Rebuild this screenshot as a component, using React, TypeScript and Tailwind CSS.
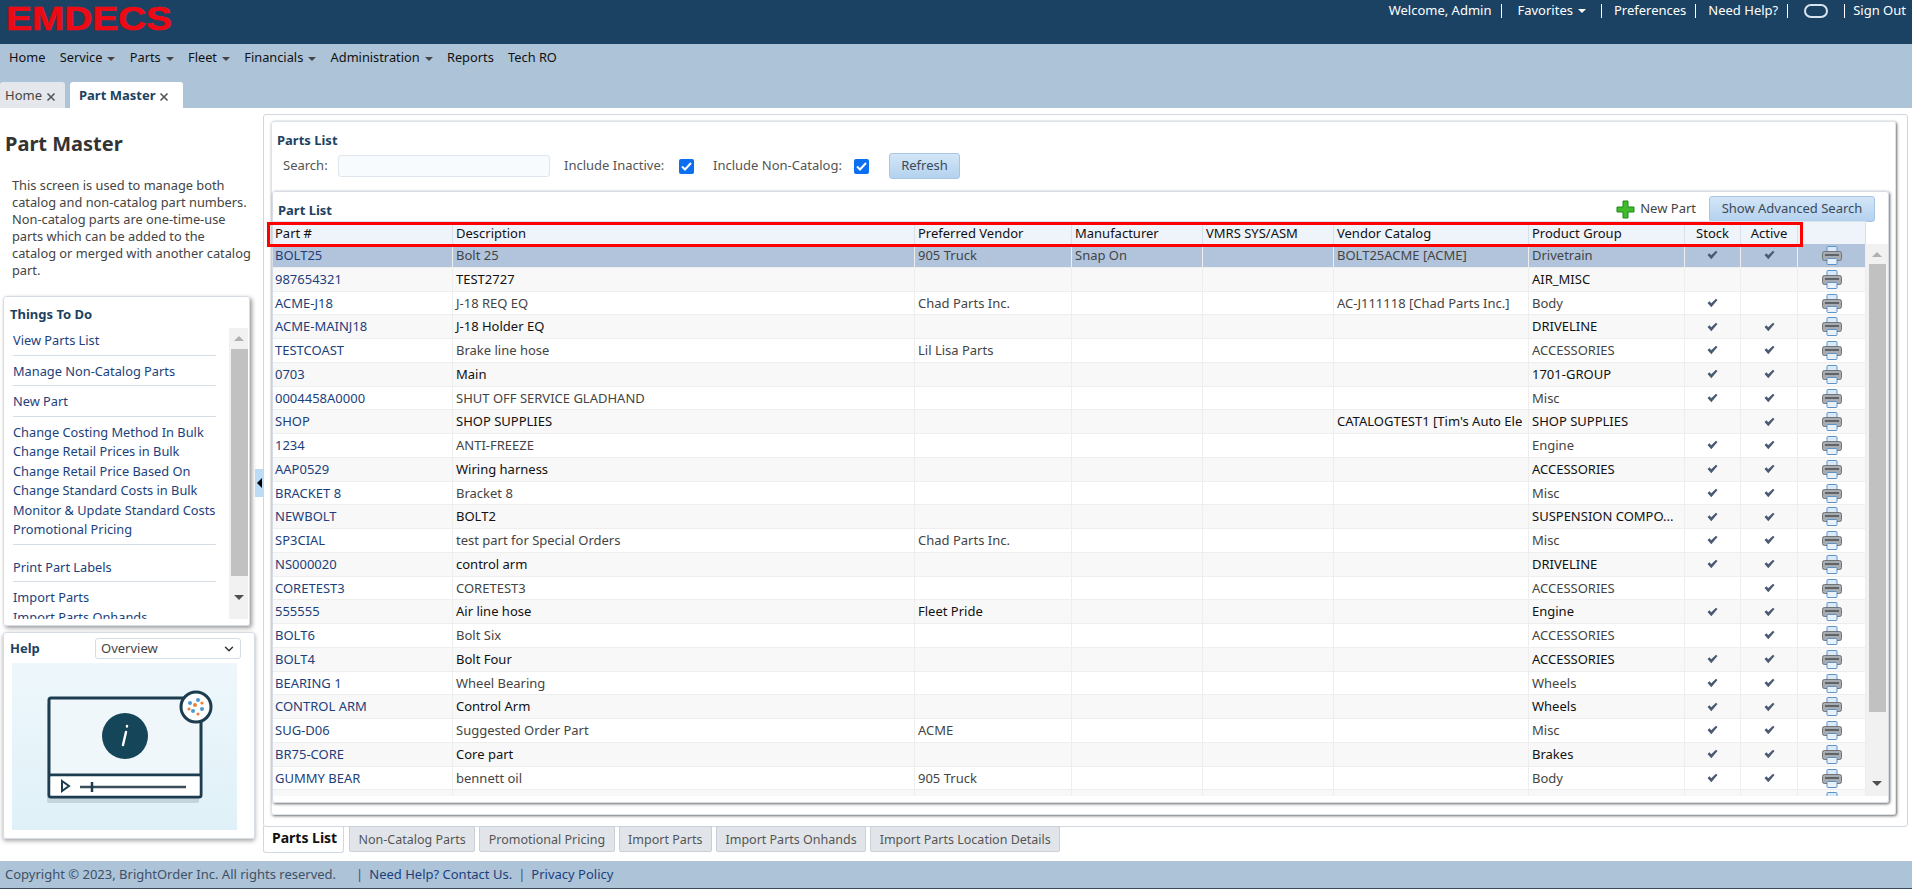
import { ChevronDown } from 'lucide-react';

type Part = {
  part: string;
  desc: string;
  vendor?: string;
  mfr?: string;
  catalog?: string;
  group: string;
  stock?: boolean;
  active?: boolean;
};

const parts: Part[] = [
  { part: 'BOLT25', desc: 'Bolt 25', vendor: '905 Truck', mfr: 'Snap On', catalog: 'BOLT25ACME [ACME]', group: 'Drivetrain', stock: true, active: true },
  { part: '987654321', desc: 'TEST2727', group: 'AIR_MISC' },
  { part: 'ACME-J18', desc: 'J-18 REQ EQ', vendor: 'Chad Parts Inc.', catalog: 'AC-J111118 [Chad Parts Inc.]', group: 'Body', stock: true },
  { part: 'ACME-MAINJ18', desc: 'J-18 Holder EQ', group: 'DRIVELINE', stock: true, active: true },
  { part: 'TESTCOAST', desc: 'Brake line hose', vendor: 'Lil Lisa Parts', group: 'ACCESSORIES', stock: true, active: true },
  { part: '0703', desc: 'Main', group: '1701-GROUP', stock: true, active: true },
  { part: '0004458A0000', desc: 'SHUT OFF SERVICE GLADHAND', group: 'Misc', stock: true, active: true },
  { part: 'SHOP', desc: 'SHOP SUPPLIES', catalog: "CATALOGTEST1 [Tim's Auto Ele", group: 'SHOP SUPPLIES', active: true },
  { part: '1234', desc: 'ANTI-FREEZE', group: 'Engine', stock: true, active: true },
  { part: 'AAP0529', desc: 'Wiring harness', group: 'ACCESSORIES', stock: true, active: true },
  { part: 'BRACKET 8', desc: 'Bracket 8', group: 'Misc', stock: true, active: true },
  { part: 'NEWBOLT', desc: 'BOLT2', group: 'SUSPENSION COMPO...', stock: true, active: true },
  { part: 'SP3CIAL', desc: 'test part for Special Orders', vendor: 'Chad Parts Inc.', group: 'Misc', stock: true, active: true },
  { part: 'NS000020', desc: 'control arm', group: 'DRIVELINE', stock: true, active: true },
  { part: 'CORETEST3', desc: 'CORETEST3', group: 'ACCESSORIES', active: true },
  { part: '555555', desc: 'Air line hose', vendor: 'Fleet Pride', group: 'Engine', stock: true, active: true },
  { part: 'BOLT6', desc: 'Bolt Six', group: 'ACCESSORIES', active: true },
  { part: 'BOLT4', desc: 'Bolt Four', group: 'ACCESSORIES', stock: true, active: true },
  { part: 'BEARING 1', desc: 'Wheel Bearing', group: 'Wheels', stock: true, active: true },
  { part: 'CONTROL ARM', desc: 'Control Arm', group: 'Wheels', stock: true, active: true },
  { part: 'SUG-D06', desc: 'Suggested Order Part', vendor: 'ACME', group: 'Misc', stock: true, active: true },
  { part: 'BR75-CORE', desc: 'Core part', group: 'Brakes', stock: true, active: true },
  { part: 'GUMMY BEAR', desc: 'bennett oil', vendor: '905 Truck', group: 'Body', stock: true, active: true },
  { part: '', desc: '', group: '' },
];

const columns = 'grid grid-cols-[180px_462px_157px_131px_131px_195px_156px_56px_57px_68px]';

function Caret({ light = false }: { light?: boolean }) {
  return <span className={`ml-[5px] inline-block h-0 w-0 border-x-[4px] border-t-[4px] border-x-transparent align-middle ${light ? 'border-t-white' : 'border-t-[#444]'}`} />;
}

function Sep() {
  return <span className="h-[14px] w-px bg-white" />;
}

function Close() {
  return (
    <svg width="10" height="10" viewBox="0 0 10 10" className="mt-[3px] ml-[4px]">
      <path d="M1.5 1.5l7 7M8.5 1.5l-7 7" stroke="#555" strokeWidth="1.6" />
    </svg>
  );
}

function Check() {
  return (
    <svg width="11" height="10" viewBox="0 0 11 10">
      <path d="M0.5 5L2.5 3.2L4.2 5.2L9 0.8L10.5 2L4.3 9.2Z" fill="#4a5a72" />
    </svg>
  );
}

function PrinterIcon() {
  return (
    <svg width="20" height="19" viewBox="0 0 20 19">
      <rect x="5" y="0.5" width="10" height="6" rx="1" fill="#dbeafa" stroke="#5c93c9" />
      <rect x="0.5" y="5.5" width="19" height="9" rx="2" fill="#a8abb0" stroke="#6f7479" />
      <rect x="3" y="8" width="14" height="2" fill="#5f6469" />
      <rect x="5" y="12.5" width="10" height="6" rx="1" fill="#e9f2fb" stroke="#5c93c9" />
    </svg>
  );
}

function Box({ checked }: { checked?: boolean }) {
  return (
    <span className="flex h-[15px] w-[15px] items-center justify-center rounded-[2px] bg-[#0b6fef]">
      {checked && (
        <svg width="11" height="9" viewBox="0 0 11 9">
          <path d="M1 4.5L4 7.5L10 1" fill="none" stroke="white" strokeWidth="2" />
        </svg>
      )}
    </span>
  );
}

function Divider() {
  return <div className="mt-[4px] mb-[6px] h-px w-[203px] bg-[#d5dde6]" />;
}

function TodoLink({ children }: { children: string }) {
  return <div className="h-[19.5px] leading-[19.5px] whitespace-nowrap text-[#1c3f7c]">{children}</div>;
}

function HelpGraphic() {
  return (
    <svg width="225" height="167" viewBox="0 0 225 167" className="block">
      <defs>
        <linearGradient id="helpBg" x1="0" y1="0" x2="0" y2="1">
          <stop offset="0" stopColor="#eef7fb" />
          <stop offset="1" stopColor="#dff1f8" />
        </linearGradient>
      </defs>
      <rect width="225" height="167" fill="url(#helpBg)" />
      <rect x="35" y="40" width="152" height="100" rx="2" fill="#6b7f8c" opacity="0.25" />
      <rect x="37" y="35" width="152" height="99" rx="2" fill="#f0f7fb" stroke="#1c3d4f" strokeWidth="3" />
      <path d="M37 112H189" stroke="#1c3d4f" strokeWidth="3" />
      <rect x="38.5" y="113.5" width="149" height="19" fill="#ffffff" />
      <path d="M50 118l7 5-7 5z" fill="none" stroke="#1c3d4f" strokeWidth="2" />
      <path d="M68 124H174" stroke="#3a4c58" strokeWidth="2.5" />
      <path d="M80 119V129" stroke="#1c3d4f" strokeWidth="2.5" />
      <circle cx="113" cy="73" r="23" fill="#154559" />
      <path d="M115 63v.5M114 69l-3 13" stroke="#fff" strokeWidth="2.4" strokeLinecap="round" />
      <circle cx="184" cy="44" r="15" fill="#fff" stroke="#1c3d4f" strokeWidth="3" />
      <g fill="#4a9bd4">
        <circle cx="178" cy="40" r="2" />
        <circle cx="186" cy="37" r="2" />
        <circle cx="190" cy="46" r="2" />
        <circle cx="181" cy="48" r="2" />
      </g>
      <g fill="#e8823c">
        <circle cx="183" cy="42" r="2" />
        <circle cx="177" cy="46" r="1.6" />
        <circle cx="186" cy="51" r="1.6" />
        <circle cx="190" cy="40" r="1.6" />
      </g>
    </svg>
  );
}

function Sidebar() {
  return (
    <aside className="relative flex w-[263px] shrink-0 flex-col pl-[3px]">
      <h1 className="mt-[23px] ml-[2px] text-[20px] leading-[26px] font-bold text-[#333]">Part Master</h1>
      <p className="mt-[20px] ml-[9px] text-[12.8px] leading-[17px] whitespace-nowrap text-[#444]">
        This screen is used to manage both<br />
        catalog and non-catalog part numbers.<br />
        Non-catalog parts are one-time-use<br />
        parts which can be added to the<br />
        catalog or merged with another catalog<br />
        part.
      </p>
      <section className="mt-[17px] h-[330px] w-[247px] rounded-[3px] border border-[#d5dce4] shadow-[2px_2px_4px_rgba(0,0,0,0.4)]">
        <h3 className="mt-[8px] ml-[6px] text-[13px] leading-[18px] font-bold text-[#1c4263]">Things To Do</h3>
        <div className="mt-[5px] flex">
          <div className="ml-[9px] h-[291px] w-[216px] overflow-hidden pt-[3px] text-[12.8px]">
            <TodoLink>View Parts List</TodoLink>
            <Divider />
            <TodoLink>Manage Non-Catalog Parts</TodoLink>
            <Divider />
            <TodoLink>New Part</TodoLink>
            <Divider />
            <TodoLink>Change Costing Method In Bulk</TodoLink>
            <TodoLink>Change Retail Prices in Bulk</TodoLink>
            <TodoLink>Change Retail Price Based On</TodoLink>
            <TodoLink>Change Standard Costs in Bulk</TodoLink>
            <TodoLink>Monitor & Update Standard Costs</TodoLink>
            <TodoLink>Promotional Pricing</TodoLink>
            <Divider />
            <div className="mt-[13px]"><TodoLink>Print Part Labels</TodoLink></div>
            <Divider />
            <TodoLink>Import Parts</TodoLink>
            <TodoLink>Import Parts Onhands</TodoLink>
          </div>
          <div className="flex h-[291px] w-[19px] flex-col items-end bg-[#f1f1f1]">
            <div className="flex h-[21px] w-full items-center justify-center">
              <span className="h-0 w-0 border-x-[5px] border-b-[5px] border-x-transparent border-b-[#b0b0b0]" />
            </div>
            <div className="h-[227px] w-[17px] bg-[#c1c1c1]" />
            <div className="flex w-full flex-1 items-center justify-center">
              <span className="h-0 w-0 border-x-[5px] border-t-[5px] border-x-transparent border-t-[#505050]" />
            </div>
          </div>
        </div>
      </section>
      <section className="mt-[6px] h-[207px] w-[252px] rounded-[3px] border border-[#d5dce4] shadow-[0_2px_4px_rgba(0,0,0,0.35)]">
        <div className="mt-[5px] flex items-center">
          <span className="ml-[6px] w-[85px] text-[13px] leading-[21px] font-bold text-[#1c4263]">Help</span>
          <div className="flex h-[21px] w-[146px] items-center justify-between rounded-[3px] border border-[#d5dce4] pr-[4px] pl-[5px] text-[13px] text-[#444]">
            Overview
            <ChevronDown size={14} strokeWidth={2.5} className="text-[#333]" />
          </div>
        </div>
        <div className="mt-[4px] ml-[8px]">
          <HelpGraphic />
        </div>
      </section>
      <button className="absolute top-[361px] left-[255px] flex h-[28px] w-[9px] items-center justify-center bg-[#bcdcf6]">
        <span className="h-0 w-0 border-y-[5px] border-r-[5px] border-y-transparent border-r-black" />
      </button>
    </aside>
  );
}

function PartGrid() {
  return (
    <section className="relative mt-[12px] h-[612px] w-[1617px] rounded-[3px] border border-[#d5dce4] shadow-[1px_1px_3px_rgba(0,0,0,0.6)]">
      <div className="flex h-[29px] items-end pr-[13px] pl-[5px]">
        <h3 className="mb-[2px] text-[13px] leading-[18px] font-bold text-[#1c4263]">Part List</h3>
        <div className="mb-[-1px] ml-auto flex items-center">
          <svg width="19" height="19" viewBox="0 0 19 19">
            <path d="M7 1h5v6h6v5h-6v6H7v-6H1V7h6z" fill="#3fbb2c" stroke="#1c8a18" strokeWidth="1" />
          </svg>
          <span className="mr-[13px] ml-[5px] text-[13px] text-[#444]">New Part</span>
          <button className="h-[26px] w-[166px] rounded-[3px] border border-[#a6c6e4] bg-gradient-to-b from-[#d4e6f7] to-[#b3d1ee] text-[13px] text-[#3a4a5a]">Show Advanced Search</button>
        </div>
      </div>
      <div className="flex">
        <div className="w-[1593px] overflow-hidden">
          <div className={`${columns} h-[23px] border-t border-[#dde3ea] bg-[#eff3fa] text-[13px] leading-[22px] text-[#111]`}>
            <div className="border-r border-[#d9e0ea] pl-[2px]">Part #</div>
            {['Description', 'Preferred Vendor', 'Manufacturer', 'VMRS SYS/ASM', 'Vendor Catalog', 'Product Group'].map(h => (
              <div key={h} className="border-r border-[#d9e0ea] pl-[3px] whitespace-nowrap">{h}</div>
            ))}
            <div className="border-r border-[#d9e0ea] text-center">Stock</div>
            <div className="border-r border-[#d9e0ea] text-center">Active</div>
            <div className="border-r border-[#d9e0ea]" />
          </div>
          <div className="h-[552px] overflow-hidden">
            {parts.map((p, i) => (
              <div
                key={i}
                className={`${columns} h-[23.75px] border-b border-[#eeeeee] text-[13px] leading-[23px] ${i === 0 ? 'bg-[#b1c4dc] text-[#444]' : i % 2 === 1 ? 'bg-[#f8f8f8] text-[#111]' : 'bg-white text-[#444]'}`}
              >
                <div className="overflow-hidden border-r border-[#eeeeee] pl-[2px] whitespace-nowrap text-[#1c3f7c]">{p.part}</div>
                <div className="overflow-hidden border-r border-[#eeeeee] pl-[3px] whitespace-nowrap">{p.desc}</div>
                <div className="overflow-hidden border-r border-[#eeeeee] pl-[3px] whitespace-nowrap">{p.vendor}</div>
                <div className="overflow-hidden border-r border-[#eeeeee] pl-[3px] whitespace-nowrap">{p.mfr}</div>
                <div className="border-r border-[#eeeeee]" />
                <div className="overflow-hidden border-r border-[#eeeeee] pl-[3px] whitespace-nowrap">{p.catalog}</div>
                <div className="overflow-hidden border-r border-[#eeeeee] pl-[3px] whitespace-nowrap">{p.group}</div>
                <div className="flex items-center justify-center border-r border-[#eeeeee]">{p.stock && <Check />}</div>
                <div className="flex items-center justify-center border-r border-[#eeeeee]">{p.active && <Check />}</div>
                <div className="flex items-start justify-center border-r border-[#eeeeee] pt-[2px]"><PrinterIcon /></div>
              </div>
            ))}
          </div>
        </div>
        <div className="mt-[23px] flex h-[552px] w-[22px] flex-col items-center bg-[#f1f1f1]">
          <div className="flex h-[20px] items-center">
            <span className="h-0 w-0 border-x-[5px] border-b-[5px] border-x-transparent border-b-[#b0b0b0]" />
          </div>
          <div className="h-[448px] w-[17px] bg-[#c1c1c1]" />
          <div className="flex flex-1 items-end pb-[10px]">
            <span className="h-0 w-0 border-x-[5px] border-t-[5px] border-x-transparent border-t-[#505050]" />
          </div>
        </div>
      </div>
      <div className="absolute top-[30px] left-[-6px] h-[25px] w-[1536px] border-[3px] border-[#ff0000]" />
    </section>
  );
}

function Main() {
  const tabs = ['Non-Catalog Parts', 'Promotional Pricing', 'Import Parts', 'Import Parts Onhands', 'Import Parts Location Details'];
  return (
    <main className="flex flex-1 flex-col pt-[6px]">
      <div className="h-[713px] w-[1645px] rounded-[3px] border border-[#cfd8e2] pt-[6px] pl-[7px]">
        <section className="h-[694px] w-[1625px] rounded-[3px] border border-[#dde3ea] shadow-[1px_1px_3px_rgba(0,0,0,0.6)]">
          <h2 className="mt-[9px] ml-[5px] text-[13px] leading-[18px] font-bold text-[#1c4263]">Parts List</h2>
          <div className="mt-[4px] ml-[11px] flex h-[26px] items-center text-[13px] text-[#555]">
            <span className="w-[55px]">Search:</span>
            <div className="h-[22px] w-[212px] rounded-[3px] border border-[#dfe6ee] bg-[#f8fbfd]" />
            <span className="ml-[14px] w-[115px]">Include Inactive:</span>
            <Box checked />
            <span className="ml-[19px] w-[141px]">Include Non-Catalog:</span>
            <Box checked />
            <button className="ml-[20px] h-[26px] w-[71px] rounded-[3px] border border-[#a6c6e4] bg-gradient-to-b from-[#d4e6f7] to-[#b3d1ee] text-[13px] text-[#3a4a5a]">Refresh</button>
          </div>
          <PartGrid />
        </section>
      </div>
      <nav className="-mt-px flex items-start text-[12.5px]">
        <div className="h-[27px] w-[81px] rounded-b-[3px] border border-t-0 border-[#cfd8e2] pl-[8px] text-[14px] leading-[24px] font-bold text-[#111]">Parts List</div>
        <div className="ml-[5px] flex gap-[4px]">
          {tabs.map(t => (
            <div key={t} className="h-[26px] rounded-[2px] border border-[#c8d0d8] bg-[#e1e5ea] px-[8.5px] leading-[26px] whitespace-nowrap text-[#555]">{t}</div>
          ))}
        </div>
      </nav>
    </main>
  );
}

export default function App() {
  return (
    <div className="flex h-[889px] flex-col overflow-hidden bg-white font-['Noto_Sans','Open_Sans',sans-serif]">
      <header className="flex h-[44px] shrink-0 justify-between bg-[#1c4263] text-[13px] text-white">
        <svg width="178" height="36" viewBox="0 0 178 36" className="mt-[2px] ml-[5px]">
          <text x="1" y="28" fontFamily="Liberation Sans" fontWeight="700" fontSize="33" fill="#ee0a14" stroke="#ee0a14" strokeWidth="0.6" textLength="166" lengthAdjust="spacingAndGlyphs">EMDECS</text>
        </svg>
        <div className="flex h-[22px] items-center pr-[6px] whitespace-nowrap">
          <span>Welcome, Admin</span>
          <span className="mr-[15px] ml-[10px] flex"><Sep /></span>
          <span className="-mt-px">Favorites<Caret light /></span>
          <span className="mr-[12px] ml-[15px] flex"><Sep /></span>
          <span>Preferences</span>
          <span className="mr-[12px] ml-[9px] flex"><Sep /></span>
          <span>Need Help?</span>
          <span className="ml-[9px] flex"><Sep /></span>
          <span className="mx-[16px] h-[14px] w-[24px] rounded-[7px] border-2 border-[#d8e4ef]" />
          <span className="mr-[8px] flex"><Sep /></span>
          <span>Sign Out</span>
        </div>
      </header>
      <div className="flex h-[64px] shrink-0 flex-col justify-between bg-[#adc3d8]">
        <nav className="flex h-[28px] items-center gap-[14.3px] pl-[9px] text-[12.8px] text-[#111]">
          <span>Home</span>
          <span>Service<Caret /></span>
          <span>Parts<Caret /></span>
          <span>Fleet<Caret /></span>
          <span>Financials<Caret /></span>
          <span>Administration<Caret /></span>
          <span>Reports</span>
          <span>Tech RO</span>
        </nav>
        <div className="flex gap-[5px] text-[13px]">
          <div className="flex h-[26px] w-[65px] items-center rounded-t-[3px] bg-[#e4e8ec] pt-px pl-[5px] text-[#444]">Home<Close /></div>
          <div className="flex h-[26px] w-[113px] items-center rounded-t-[3px] bg-white pt-px pl-[9px] font-bold text-[#1c4263]">Part Master<Close /></div>
        </div>
      </div>
      <div className="flex min-h-0 flex-1">
        <Sidebar />
        <Main />
      </div>
      <footer className="flex h-[28px] shrink-0 items-center border-b border-[#3a4a5a] bg-[#adc3d8] pl-[5px] text-[13px] whitespace-nowrap text-[#3d5166]">
        <span>Copyright © 2023, BrightOrder Inc. All rights reserved.</span>
        <span className="mr-[6px] ml-[20px]">|</span>
        <span className="text-[#1c3f7c]">Need Help? Contact Us.</span>
        <span className="mx-[6px]">|</span>
        <span className="text-[#1c3f7c]">Privacy Policy</span>
      </footer>
    </div>
  );
}
